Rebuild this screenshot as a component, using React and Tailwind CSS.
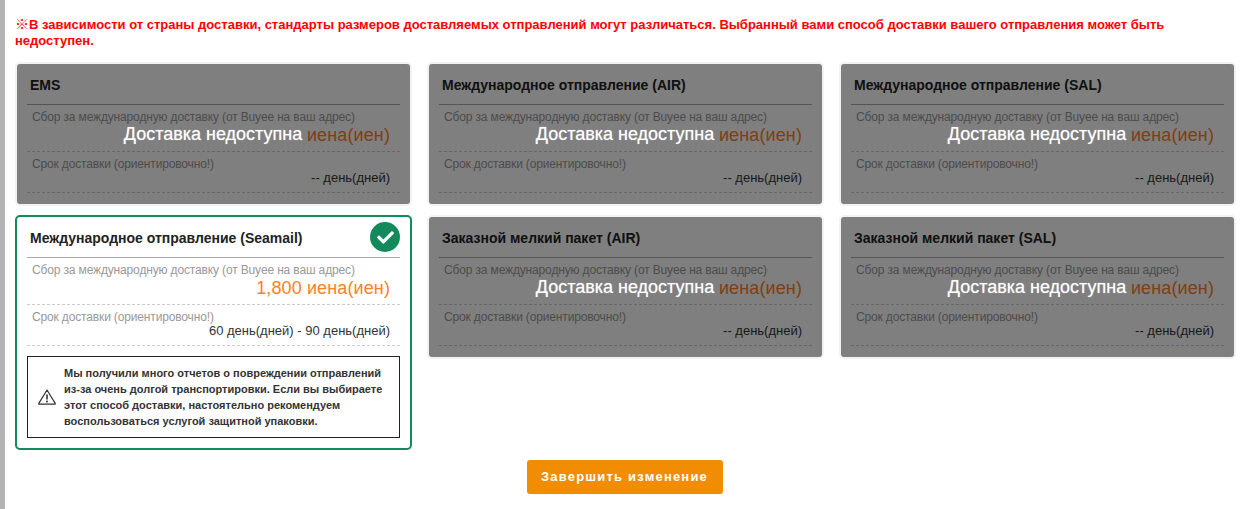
import { FaCheck } from "react-icons/fa";

const font = { fontFamily: '"Liberation Sans", Arial, sans-serif' };

function Warning() {
  return (
    <svg width="18" height="16" viewBox="0 0 18 16" fill="none" className="shrink-0">
      <path
        d="M9 1 L17.2 14.4 a0.5 0.5 0 0 1 -0.4 0.8 H1.2 a0.5 0.5 0 0 1 -0.4 -0.8 Z"
        stroke="#333"
        strokeWidth="1.2"
        strokeLinejoin="round"
      />
      <path d="M9 5.4 V10.4" stroke="#333" strokeWidth="1.6" />
      <circle cx="9" cy="12.4" r="1" fill="#333" />
    </svg>
  );
}

function Check() {
  return (
    <div className="absolute right-[10px] top-[5px] flex h-[30px] w-[30px] items-center justify-center rounded-full bg-[#128a5c] text-white">
      <FaCheck size={17} />
    </div>
  );
}

function Card({ title, fee, days, selected, children }) {
  return (
    <div
      className={`relative rounded-[5px] border-2 px-[10px] ${
        selected ? "border-[#128a5c] pb-[10px]" : "border-[#f2f2f2] pb-[11px]"
      }`}
    >
      {selected && <Check />}
      <div className="flex h-[41px] items-center border-b border-[#aaaaaa] pt-[2px] pl-[3px] text-[14px] font-bold text-[#222222]">
        {title}
      </div>
      <div className="h-[47px] border-b border-dashed border-[#cccccc] px-[5px] pt-[5px]">
        <p className="text-[12px] leading-[14px] tracking-[-0.15px] text-[#999999]">
          Сбор за международную доставку (от Buyee на ваш адрес)
        </p>
        <p className="mt-[1px] pr-[5px] text-right text-[18px] leading-[20px] tracking-[0.12px] text-[#ff7f24]">
          {fee}
        </p>
      </div>
      <div className="h-[41px] border-b border-dashed border-[#cccccc] px-[5px] pt-[5px]">
        <p className="text-[12px] leading-[14px] tracking-[-0.15px] text-[#999999]">
          Срок доставки (ориентировочно!)
        </p>
        <p className="pr-[5px] text-right text-[13px] leading-[14px] text-[#333333]">
          {days}
        </p>
      </div>
      {children}
      {!selected && (
        <div className="absolute inset-0 flex items-center justify-center rounded-[3px] bg-black/50 pr-[1px]">
          <span className="text-[18px] text-white [text-shadow:0_0_1px_rgba(255,255,255,0.6)]">
            Доставка недоступна
          </span>
        </div>
      )}
    </div>
  );
}

const unavailable = (title) => ({
  title,
  fee: "иена(иен)",
  days: "-- день(дней)",
});

export default function App() {
  return (
    <div
      style={font}
      className="h-[509px] overflow-hidden border-l-[5px] border-[#b3b3b3] bg-white px-[10px]"
    >
      <p className="pt-[16px] text-[13px] leading-[16px] font-bold text-[#ff0000]">
        <span className="font-['Noto_Sans_CJK_JP'] text-[14px] leading-none font-normal">※</span>В
        зависимости от страны доставки, стандарты размеров доставляемых
        отправлений могут различаться. Выбранный вами способ доставки вашего
        отправления может быть недоступен.
      </p>
      <div className="mt-[13px] grid grid-cols-[397px_397px_397px] items-start gap-x-[15px] gap-y-[9px]">
        <Card {...unavailable("EMS")} />
        <Card {...unavailable("Международное отправление (AIR)")} />
        <Card {...unavailable("Международное отправление (SAL)")} />
        <Card
          selected
          title="Международное отправление (Seamail)"
          fee="1,800 иена(иен)"
          days="60 день(дней) - 90 день(дней)"
        >
          <div className="mt-[10px] flex items-center gap-[8px] border border-[#222222] py-[8px] pl-[10px]">
            <Warning />
            <p className="w-[322px] text-[11px] leading-[16px] font-bold text-[#333333]">
              Мы получили много отчетов о повреждении отправлений из-за очень
              долгой транспортировки. Если вы выбираете этот способ доставки,
              настоятельно рекомендуем воспользоваться услугой защитной упаковки.
            </p>
          </div>
        </Card>
        <Card {...unavailable("Заказной мелкий пакет (AIR)")} />
        <Card {...unavailable("Заказной мелкий пакет (SAL)")} />
      </div>
      <div className="mt-[10px] flex justify-center pr-[2px]">
        <button className="h-[34px] w-[196px] rounded-[3px] bg-[#f28c00] text-[13px] font-bold tracking-[1.2px] text-white">
          Завершить изменение
        </button>
      </div>
    </div>
  );
}
